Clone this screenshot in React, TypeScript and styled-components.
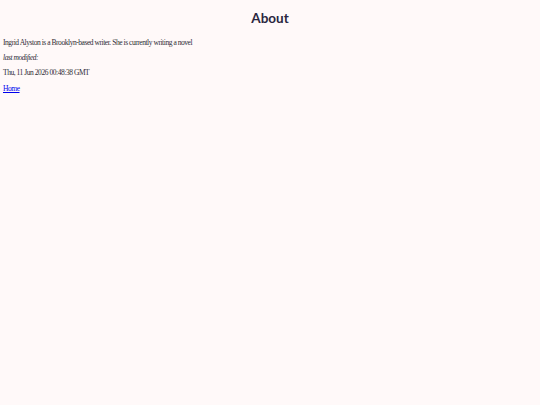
import styled, { createGlobalStyle } from "styled-components";

const GlobalStyle = createGlobalStyle`
  html, body {
    margin: 0;
    padding: 0;
    background: #fff9f9;
  }
  body {
    padding: 4px 3px;
    font-family: "Liberation Serif", "Times New Roman", serif;
    color: #2e2c35;
  }
`;

const Page = styled.main`
  display: flex;
  flex-direction: column;
`;

const Title = styled.h1`
  margin: 5px 0 10px;
  text-align: center;
  font-family: Lato, "Open Sans", sans-serif;
  font-size: 13.5px;
  font-weight: 700;
  line-height: 18px;
  color: #2a2640;
`;

const Para = styled.p<{ $italic?: boolean }>`
  margin: 0 0 5px;
  font-size: 7.5px;
  line-height: 10.5px;
  font-style: ${(p) => (p.$italic ? "italic" : "normal")};
  letter-spacing: -0.45px;
  &:first-of-type {
    margin-top: 1px;
    margin-bottom: 4px;
  }
`;

const Link = styled.a`
  color: #0000ee;
  text-decoration: underline;
`;

const App = () => (
  <>
    <GlobalStyle />
    <Page>
      <Title>About</Title>
      <Para>
        Ingrid Alyston is a Brooklyn-based writer. She is currently writing a
        novel
      </Para>
      <Para $italic>last modified:</Para>
      <Para>Thu, 11 Jun 2026 00:48:38 GMT</Para>
      <Para>
        <Link href="#">Home</Link>
      </Para>
    </Page>
  </>
);

export default App;
